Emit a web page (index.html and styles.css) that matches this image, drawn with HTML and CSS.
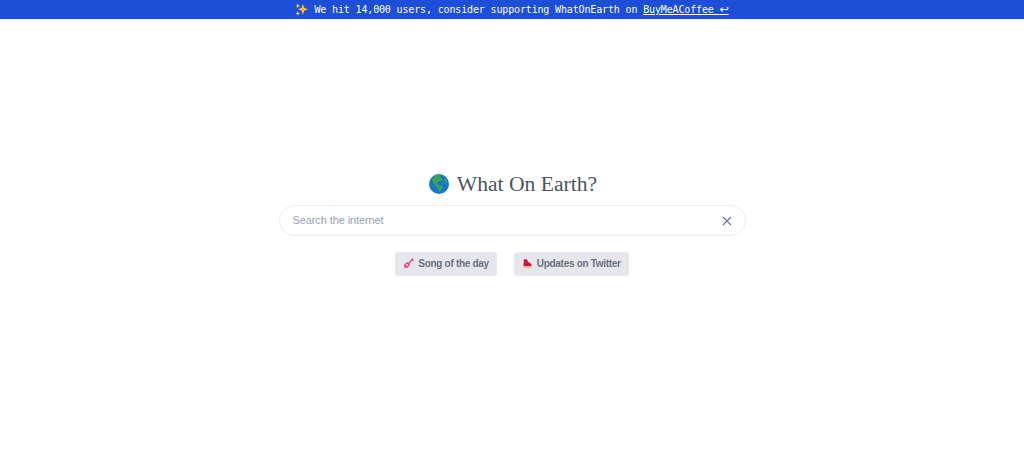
FILE: index.html
```html
<!DOCTYPE html>
<html lang="en">
<head>
  <meta charset="UTF-8">
  <meta name="viewport" content="width=device-width, initial-scale=1.0">
  <title>What On Earth?</title>
  <link rel="stylesheet" href="styles.css">
</head>
<body>
  <div class="banner">
    <svg class="sparkles" viewBox="0 0 14 14" width="13" height="13">
      <path d="M8.5 1 L10 5.2 L14 6.8 L10 8.4 L8.5 12.8 L7 8.4 L3 6.8 L7 5.2 Z" fill="#f9b82c"/>
      <path d="M3 .5 L3.8 2.4 L5.6 3.1 L3.8 3.8 L3 5.7 L2.2 3.8 L.4 3.1 L2.2 2.4 Z" fill="#fcd34d"/>
      <path d="M3 8.8 L3.7 10.6 L5.4 11.3 L3.7 12 L3 13.8 L2.3 12 L.6 11.3 L2.3 10.6 Z" fill="#fde68a"/>
    </svg>
    <span>We hit 14,000 users, consider supporting WhatOnEarth on <a href="#">BuyMeACoffee <span class="arrow">↩</span></a></span>
  </div>

  <main>
    <h1 class="title">
      <svg class="globe" viewBox="0 0 20 20" width="20" height="20">
        <circle cx="10" cy="10" r="10" fill="#1877c9"/>
        <path d="M6 1.2 C7.5 .6 9.5 .3 11.5 .7 L12.5 2 L10.5 2.6 L11.2 4 L13.5 4.4 L13 6.5 L11 7.4 L9.5 7 L8.5 8.6 L7.6 10 L9.6 11.2 L12 11.4 L13.6 12.6 L13.2 14.6 L11.6 16.4 L10.6 18 L9.6 17.2 L9.2 14.6 L7.8 13 L6 11.6 L4.4 9.4 L3.2 7 L3.6 4.4 L5 3.6 Z" fill="#3aa655"/>
        <path d="M15.6 3.6 L17.6 6 L18.4 8.4 L16.8 8.8 L15.4 6.8 Z" fill="#3aa655"/>
      </svg>
      What On Earth?
    </h1>

    <div class="search">
      <input class="search-input" type="text" placeholder="Search the internet">
      <button class="clear" aria-label="Clear">
        <svg viewBox="0 0 10 10" width="10" height="10">
          <path d="M1 1 L9 9 M9 1 L1 9" stroke="#6b7280" stroke-width="1.1" fill="none"/>
        </svg>
      </button>
    </div>

    <div class="links">
      <a class="pill" href="#">
        <svg viewBox="0 0 12 12" width="11" height="11">
          <path d="M6 6 L10.6 1.4" stroke="#d6336c" stroke-width="1.2" fill="none"/>
          <path d="M9.4 .8 L11.4 2.8" stroke="#e11d48" stroke-width="1.2" fill="none"/>
          <path d="M5.2 4.4 L7.6 6.8 L7 7.8 C7 9 6.2 9.2 5.8 9.6 C5.2 11 3 11.6 1.7 10.3 C.4 9 1 6.8 2.4 6.2 C2.8 5.8 3 5 4.2 5 Z" fill="#e8497a"/>
          <circle cx="4.4" cy="7.6" r="1.1" fill="#f6d5df"/>
        </svg>
        Song of the day
      </a>
      <a class="pill" href="#">
        <svg viewBox="0 0 12 12" width="11" height="12">
          <path d="M2 1.2 C3 .6 5 .6 6 1.4 L6.4 4 C8.6 4 10.6 5.4 10.6 8.4 L1.6 8.4 Z" fill="#d0103a"/>
          <rect x="1.6" y="9" width="9" height="1.8" rx=".6" fill="#f6c89f"/>
        </svg>
        Updates on Twitter
      </a>
    </div>
  </main>
</body>
</html>
```

FILE: styles.css
```css
* {
  box-sizing: border-box;
}

body {
  margin: 0;
  background-color: #fff;
  font-family: 'Liberation Sans', Arial, sans-serif;
}

.banner {
  height: 19px;
  background-color: #1d4ed8;
  color: #fff;
  display: flex;
  justify-content: center;
  align-items: center;
  gap: 6px;
  font-family: 'DejaVu Sans Mono', monospace;
  font-size: 10px;
  letter-spacing: -0.15px;
}

.banner a {
  color: #fff;
}

.arrow {
  font-family: 'DejaVu Sans', sans-serif;
  font-size: 11px;
}

.sparkles {
  flex-shrink: 0;
}

main {
  display: flex;
  flex-direction: column;
  align-items: center;
  padding-top: 152px;
}

.title {
  display: flex;
  align-items: center;
  gap: 8px;
  margin: 0;
  padding-left: 2px;
  height: 26px;
  font-family: 'Liberation Serif', serif;
  font-size: 21.6px;
  font-weight: 400;
  color: #4b5563;
}

.search {
  width: 467px;
  height: 31px;
  margin-top: 8px;
  padding: 0 13px;
  display: flex;
  align-items: center;
  border: 1px solid #eceef1;
  border-radius: 16px;
}

.search-input {
  flex: 1;
  border: none;
  outline: none;
  padding: 0 0 2px;
  font-family: inherit;
  font-size: 11px;
  letter-spacing: -0.1px;
  color: #374151;
}

.search-input::placeholder {
  color: #9ca3af;
}

.clear {
  display: flex;
  padding: 0;
  border: none;
  background: none;
}

.links {
  display: flex;
  gap: 17px;
  margin-top: 16px;
}

.pill {
  height: 24px;
  padding: 0 8px 2px;
  display: flex;
  align-items: center;
  gap: 4px;
  background-color: #e5e7eb;
  border-radius: 4px;
  color: #6b7280;
  font-size: 10px;
  font-weight: 700;
  letter-spacing: -0.3px;
  text-decoration: none;
}

.pill svg {
  margin-top: 1px;
}
```
